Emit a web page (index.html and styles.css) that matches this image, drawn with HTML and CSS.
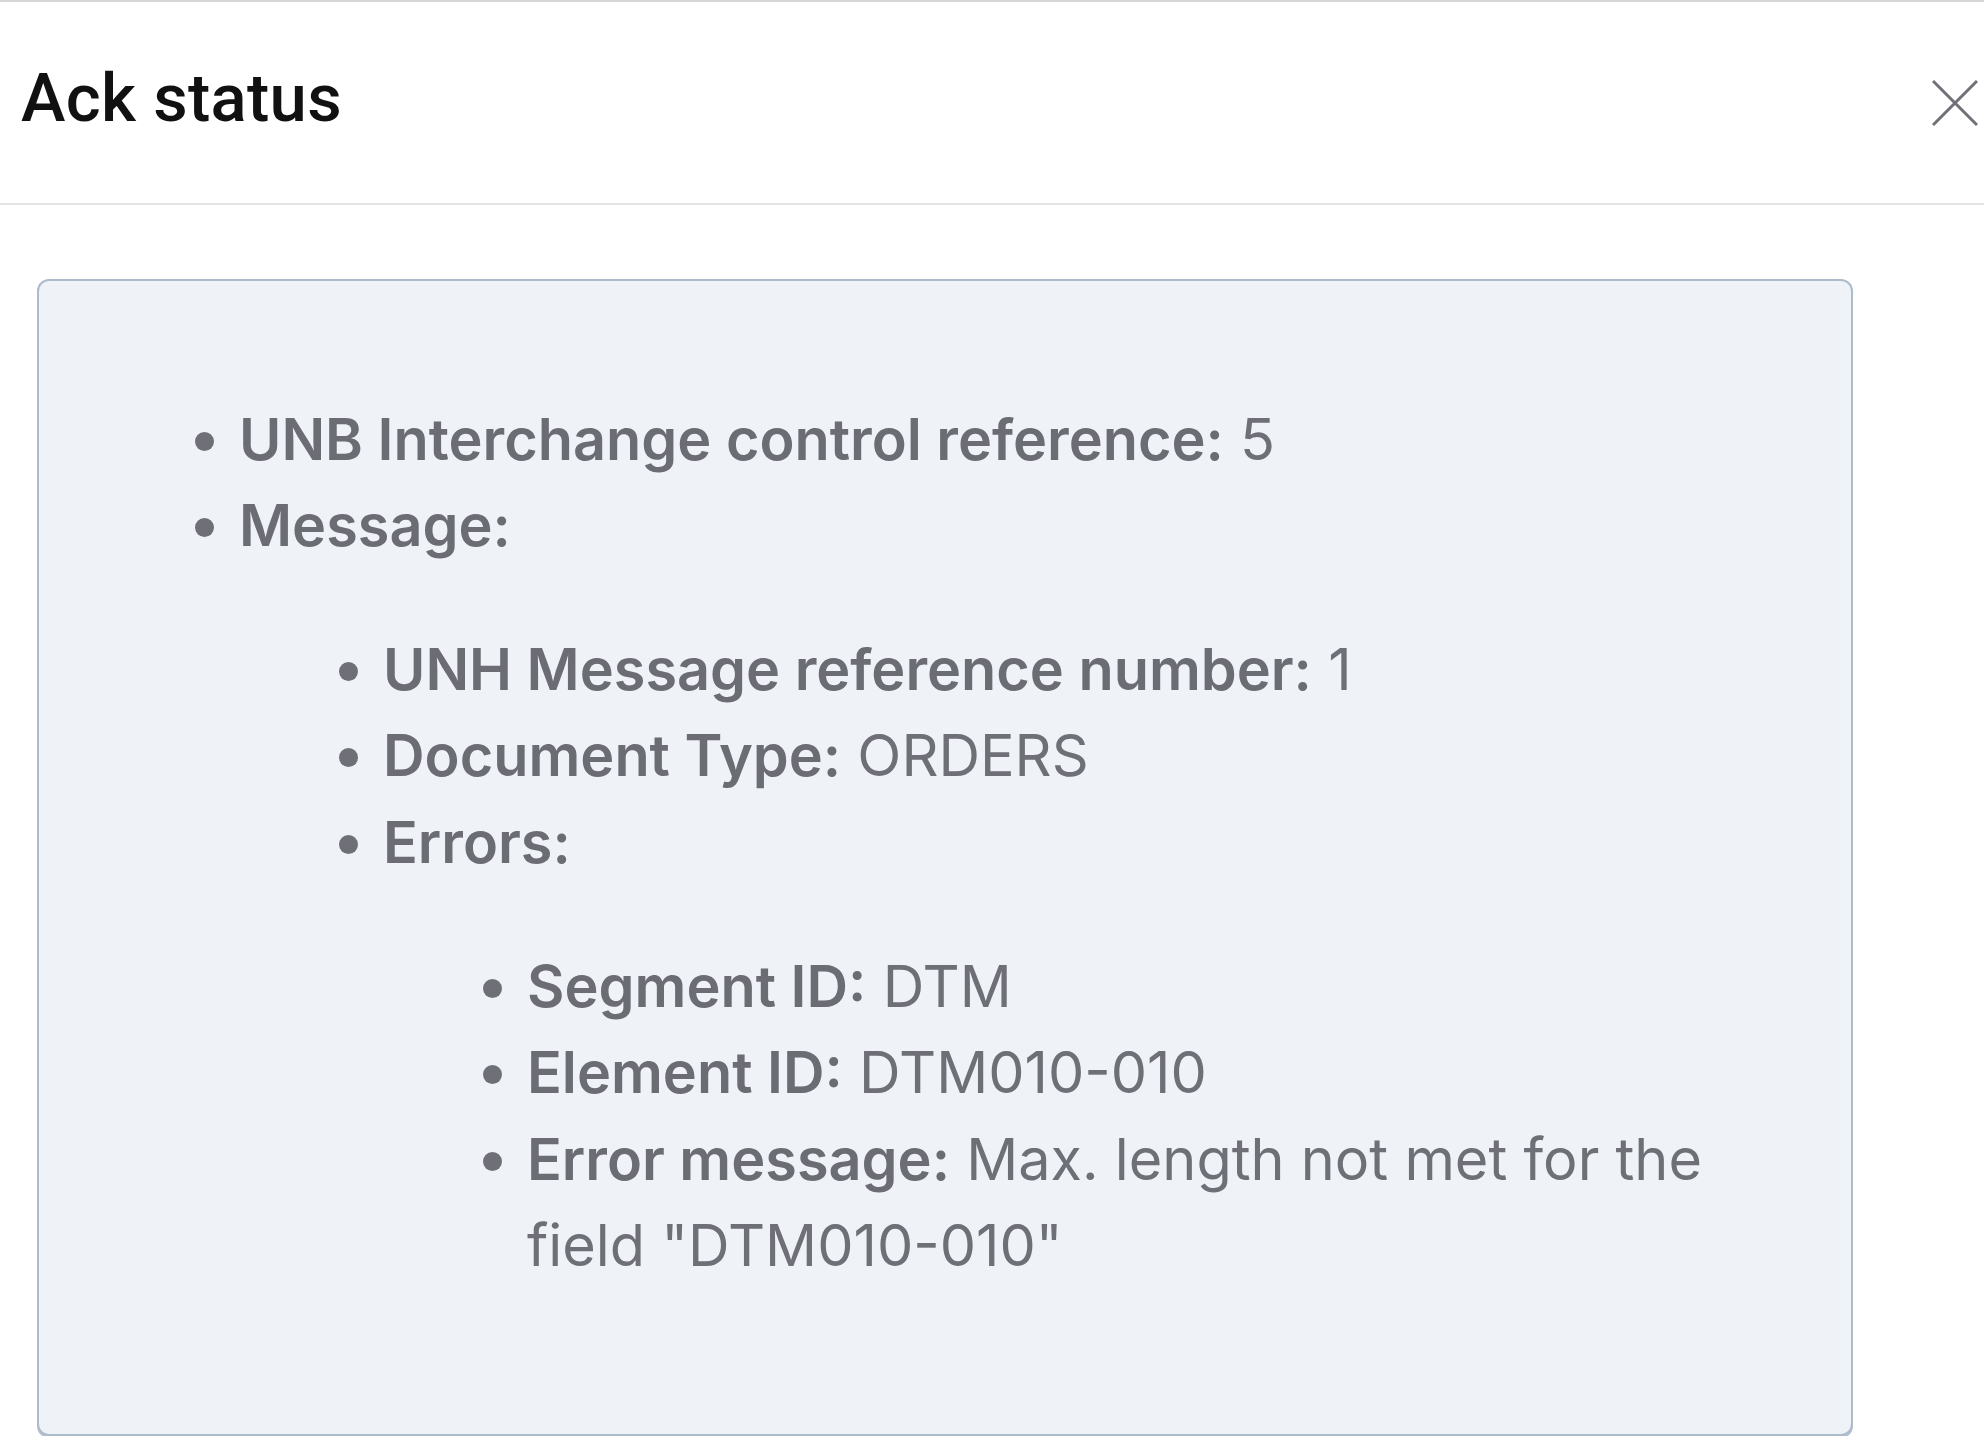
FILE: index.html
```html
<!DOCTYPE html>
<html>

<head>
  <meta name="viewport" content="width=device-width, initial-scale=1">
  <title>Ack status</title>
  <link rel="stylesheet" href="styles.css">
</head>

<body>
  <div class="modal">
    <div class="modal-header">
      <h2>Ack status</h2>
      <button class="close" aria-label="Close">
        <svg width="46" height="46" viewBox="0 0 46 46">
          <path d="M1 1 L45 45 M45 1 L1 45" stroke="#707178" stroke-width="3" fill="none" />
        </svg>
      </button>
    </div>

    <div class="modal-body">
      <div class="ack-box">
        <ul>
          <li><b>UNB Interchange control reference:</b> 5</li>
          <li><b>Message:</b>
            <ul>
              <li><b>UNH Message reference number:</b> 1</li>
              <li><b>Document Type:</b> ORDERS</li>
              <li><b>Errors:</b>
                <ul>
                  <li><b>Segment ID:</b> DTM</li>
                  <li><b>Element ID:</b> DTM010-010</li>
                  <li><b>Error message:</b> Max. length not met for the field "DTM010-010"</li>
                </ul>
              </li>
            </ul>
          </li>
        </ul>
      </div>
    </div>
  </div>
</body>

</html>
```

FILE: styles.css
```css
body {
  margin: 0;
  background-color: #fff;
  font-family: Inter, "Noto Sans", sans-serif;
}

.modal {
  border-top: 2px solid #d6d6d8;
}

.modal-header {
  display: flex;
  align-items: center;
  justify-content: space-between;
  height: 203px;
  padding: 0 6px 9px 21px;
  box-sizing: border-box;
  border-bottom: 2px solid #e3e3e5;
}

.modal-header h2 {
  margin: 0;
  font-family: Roboto, "Liberation Sans", sans-serif;
  font-size: 67px;
  font-weight: 500;
  letter-spacing: 0.3px;
  color: #111;
}

.close {
  border: none;
  background: none;
  padding: 0;
  display: flex;
  margin-top: 9px;
  cursor: pointer;
}

.modal-body {
  padding: 74px 131px 0 37px;
}

.ack-box {
  background-color: #eff3f8;
  border: 2px solid #adbbcb;
  border-radius: 12px;
  box-shadow: 0 2px 0 #b4c0ce;
  padding: 57px 56px 88px 56px;
  font-size: 57.6px;
  line-height: 1.5;
  color: #6e6f77;
}

.ack-box ul {
  margin: 1em 0;
  padding-left: 144px;
  list-style-type: disc;
}

.ack-box b {
  font-weight: 600;
  color: #6b6c74;
}
```
